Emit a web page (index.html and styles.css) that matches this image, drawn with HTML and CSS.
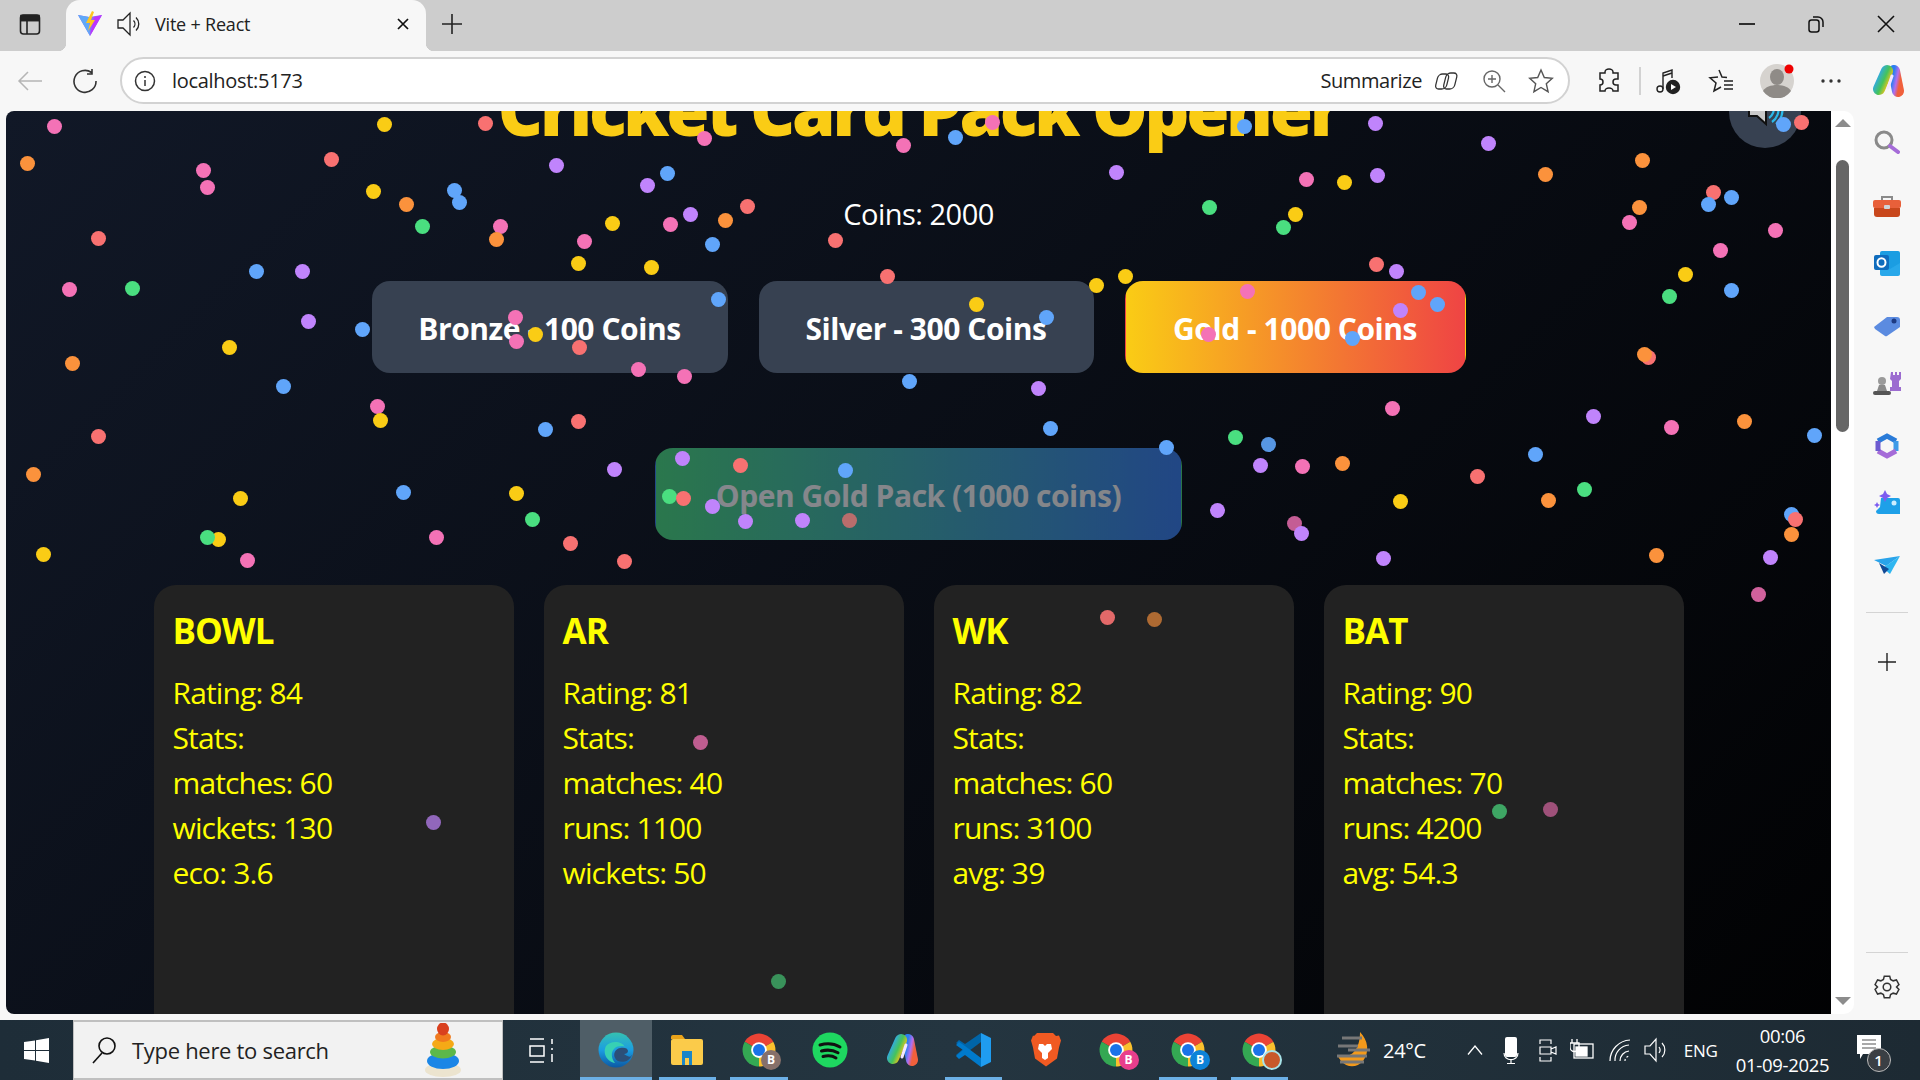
FILE: index.html
```html
<!DOCTYPE html>
<html lang="en">
<head>
	<meta charset="UTF-8">
	<title>Vite + React</title>
	<link rel="stylesheet" href="styles.css">
</head>
<body>
	<svg class="defs" width="0" height="0">
		<defs>
			<linearGradient id="cp1" x1="0" y1="0" x2="1" y2="1"><stop offset="0" stop-color="#2fa8f0"/><stop offset=".55" stop-color="#45c35a"/><stop offset="1" stop-color="#f5c518"/></linearGradient>
			<linearGradient id="cp2" x1="0" y1="0" x2="1" y2="1"><stop offset="0" stop-color="#2b7ff0"/><stop offset=".55" stop-color="#b06ef0"/><stop offset="1" stop-color="#f0603c"/></linearGradient>
		</defs>
		<symbol id="chrome" viewBox="0 0 48 48">
			<path d="M5 13A22 22 0 0 1 43 13L24 24Z" fill="#ea4335"/>
			<path d="M43 13A22 22 0 0 1 24 46L24 24Z" fill="#fbc02d"/>
			<path d="M24 46A22 22 0 0 1 5 13L24 24Z" fill="#34a853"/>
			<circle cx="24" cy="24" r="10.5" fill="#fff"/>
			<circle cx="24" cy="24" r="8" fill="#1a73e8"/>
		</symbol>
		<symbol id="copilot" viewBox="0 0 34 34">
			<path d="M23 7 27 27" fill="none" stroke="url(#cp2)" stroke-width="12" stroke-linecap="round"/>
			<path d="M16 7 8 25" fill="none" stroke="url(#cp1)" stroke-width="12" stroke-linecap="round"/>
			<path d="M17 24 21 12" fill="none" stroke="#f4e6ff" stroke-width="3" stroke-linecap="round"/>
		</symbol>
	</svg>

	<!-- tab strip -->
	<div class="tabstrip">
		<svg class="icon tab-panel" width="24" height="24" viewBox="0 0 24 24" fill="none" stroke="#222" stroke-width="1.6"><rect x="2.5" y="3" width="19" height="19" rx="3"/><path d="M2.5 8.5h19M9 8.5V22"/><path d="M3 3.5h18v5H3z" fill="#222"/></svg>
		<div class="tab">
			<svg class="icon" width="26" height="26" viewBox="0 0 26 26"><path d="M1 4 12 6 25 4 13 25Z" fill="#8d6cf5"/><path d="M1 4 12 6 13 25Z" fill="#5fa8f8"/><path d="M13 25 25 4 17 6Z" fill="#bd34fe"/><path d="M15 0 9 12h4l-2 8 7-11h-4l3-8Z" fill="#ffc51f"/></svg>
			<svg class="icon tab-sound" width="26" height="26" viewBox="0 0 26 26" fill="none" stroke="#222" stroke-width="1.3"><path d="M2 9h5l7-7v22l-7-7H2Z"/><path d="M17.5 9.5a5 5 0 0 1 0 7M20 6.500a9 9 0 0 1 0 13"/></svg>
			<span class="tab-title">Vite + React</span>
			<svg class="icon tab-close" width="14" height="14" viewBox="0 0 14 14" stroke="#111" stroke-width="1.7"><path d="M2 2l10 10M12 2 2 12"/></svg>
		</div>
		<svg class="icon tab-new" width="22" height="22" viewBox="0 0 22 22" stroke="#222" stroke-width="1.6"><path d="M11 1v20M1 11h20"/></svg>
		<div class="window-btns">
			<svg class="icon" width="16" height="16" viewBox="0 0 16 16" stroke="#111" stroke-width="1.7"><path d="M0 8h16"/></svg>
			<svg class="icon" width="16" height="18" viewBox="0 0 16 18" fill="none" stroke="#111" stroke-width="1.5"><rect x="1" y="5" width="10" height="12" rx="2.500"/><path d="M5 2h5a5 5 0 0 1 5 5v5"/></svg>
			<svg class="icon" width="18" height="18" viewBox="0 0 18 18" stroke="#111" stroke-width="1.6"><path d="M1 1l16 16M17 1 1 17"/></svg>
		</div>
	</div>

	<!-- address bar -->
	<div class="toolbar">
		<svg class="icon tool-back" width="26" height="22" viewBox="0 0 26 22" fill="none" stroke="#b5b5b5" stroke-width="1.500"><path d="M25 11H2M11 2l-9 9 9 9"/></svg>
		<svg class="icon tool-reload" width="26" height="26" viewBox="0 0 26 26" fill="none" stroke="#333" stroke-width="1.600"><path d="M19.500 4.500A11 11 0 1 0 24 13M20 1v5h-5"/></svg>
		<div class="address">
			<svg class="icon" width="22" height="22" viewBox="0 0 22 22" fill="none" stroke="#333" stroke-width="1.500"><circle cx="11" cy="11" r="9.500"/><path d="M11 10v6M11 6v2"/></svg>
			<span class="url">localhost:5173</span>
			<span class="summarize">Summarize</span>
			<svg class="icon" width="26" height="26" viewBox="0 0 26 26" fill="none" stroke="#333" stroke-width="1.300"><rect x="3" y="6" width="11" height="15" rx="4" transform="skewX(-14) translate(5 0)"/><rect x="11" y="4" width="11" height="16" rx="4" transform="skewX(-14) translate(5 1)"/></svg>
			<svg class="icon addr-zoom" width="24" height="24" viewBox="0 0 24 24" fill="none" stroke="#666" stroke-width="1.400"><circle cx="10" cy="10" r="8"/><path d="M16 16l7 7M10 6v8M6 10h8"/></svg>
			<svg class="icon addr-star" width="26" height="26" viewBox="0 0 26 26" fill="none" stroke="#555" stroke-width="1.400"><path d="M13 2l3.300 7.500 8 .8-6 5.400 1.800 8-7.100-4.200-7.100 4.200 1.800-8-6-5.400 8-.8Z"/></svg>
		</div>
		<div class="tool-right">
			<svg class="icon" width="24" height="26" viewBox="0 0 24 26" fill="none" stroke="#222" stroke-width="1.500"><path d="M8 4a4 3 0 0 1 8 0v1h5v6h-2a3 3 0 0 0 0 6h2v6H16a4 3 0 0 0-8 0H3v-6a3 3 0 0 0 0-6V5h5Z"/></svg>
			<span class="tool-sep"></span>
			<svg class="icon tool-music" width="26" height="28" viewBox="0 0 26 28" fill="none" stroke="#222" stroke-width="1.400"><circle cx="5" cy="22" r="3"/><path d="M8 22V6l9-3v8"/><path d="M8 9l9-3"/><circle cx="18" cy="20" r="6.500" fill="#222"/><path d="M16 17l5 3-5 3Z" fill="#fff" stroke="none"/></svg>
			<svg class="icon tool-fav" width="26" height="26" viewBox="0 0 26 26" fill="none" stroke="#222" stroke-width="1.500"><path d="M11 2l3 7 5 .5M10 9l-8 .8 6 5.200-2 8 7-4M16 13h9M16 17h9M16 21h9"/></svg>
			<svg class="icon tool-profile" width="34" height="34" viewBox="0 0 34 34"><circle cx="17" cy="17" r="17" fill="#d6d3cf"/><ellipse cx="17" cy="13" rx="7" ry="8" fill="#8f8b87"/><path d="M3 27c2-4 8-6 14-6s12 2 14 6a17 17 0 0 1-28 0Z" fill="#8f8b87"/><circle cx="29" cy="5" r="4.500" fill="#e00"/></svg>
			<svg class="icon tool-more" width="20" height="6" viewBox="0 0 20 6" fill="#333"><circle cx="2" cy="3" r="1.700"/><circle cx="10" cy="3" r="1.700"/><circle cx="18" cy="3" r="1.700"/></svg>
			<svg class="icon tool-copilot" width="34" height="34"><use href="#copilot"/></svg>
		</div>
	</div>

	<div class="viewport">
		<div class="page">
			<div class="app">
				<h1 class="app-title">Cricket Card Pack Opener</h1>
				<p class="coins">Coins: 2000</p>
				<div class="packs">
					<button class="pack pack-bronze">Bronze - 100 Coins</button>
					<button class="pack pack-silver">Silver - 300 Coins</button>
					<button class="pack pack-gold">Gold - 1000 Coins</button>
				</div>
				<button class="open-btn">Open Gold Pack (1000 coins)</button>
				<div class="cards">
					<div class="card">
						<h3>BOWL</h3>
						<p>Rating: 84</p>
						<p>Stats:</p>
						<p>matches: 60</p>
						<p>wickets: 130</p>
						<p>eco: 3.6</p>
					</div>
					<div class="card">
						<h3>AR</h3>
						<p>Rating: 81</p>
						<p>Stats:</p>
						<p>matches: 40</p>
						<p>runs: 1100</p>
						<p>wickets: 50</p>
					</div>
					<div class="card">
						<h3>WK</h3>
						<p>Rating: 82</p>
						<p>Stats:</p>
						<p>matches: 60</p>
						<p>runs: 3100</p>
						<p>avg: 39</p>
					</div>
					<div class="card">
						<h3>BAT</h3>
						<p>Rating: 90</p>
						<p>Stats:</p>
						<p>matches: 70</p>
						<p>runs: 4200</p>
						<p>avg: 54.3</p>
					</div>
				</div>
			</div>
			<div class="sound-btn">
				<svg width="72" height="72" viewBox="0 0 72 72" fill="none"><path d="M20 30h8l9-8v26l-9-8h-8Z" fill="#c9c9c9" stroke="#111" stroke-width="2"/><path d="M40 42a10 10 0 0 0 4-12M43 46a15 15 0 0 0 6-16M47 48a19 19 0 0 0 6-18" stroke="#2bb8e8" stroke-width="2.200"/></svg>
			</div>
			<div class="confetti" id="confetti"></div>
		</div>

		<div class="scrollbar">
			<span class="arrow-up"></span>
			<span class="thumb"></span>
			<span class="arrow-down"></span>
		</div>

		<div class="sidebar">
			<span class="side-item"><svg width="26" height="26" viewBox="0 0 26 26" fill="none"><circle cx="10" cy="10" r="8" stroke="#8a8a8a" stroke-width="3"/><path d="M16 16l8 6" stroke="#a56cd8" stroke-width="4" stroke-linecap="round"/></svg></span>
			<span class="side-item side-low"><svg width="28" height="24" viewBox="0 0 28 24"><path d="M9 6V3h10v3" fill="none" stroke="#8a8a8a" stroke-width="2"/><rect y="6" width="28" height="8" rx="2" fill="#e8603a"/><path d="M1 14h26v6a3 3 0 0 1-3 3H4a3 3 0 0 1-3-3Z" fill="#c8471c"/><rect x="11" y="11" width="6" height="4" rx="1" fill="#cfd3d6"/></svg></span>
			<span class="side-item"><svg width="26" height="26" viewBox="0 0 26 26"><rect x="6" y="1" width="20" height="24" rx="2" fill="#1b9de2"/><path d="M6 13l10 6 10-6v11a2 2 0 0 1-2 2H8a2 2 0 0 1-2-2Z" fill="#28a8ea"/><rect y="5" width="15" height="15" rx="2" fill="#0f6cbd"/><ellipse cx="7.500" cy="12.500" rx="4" ry="4.300" fill="none" stroke="#fff" stroke-width="2"/></svg></span>
			<span class="side-item side-low"><svg width="26" height="22" viewBox="0 0 26 22"><path d="M0 12 13 2h10a3 3 0 0 1 3 3v7L13 21a2 2 0 0 1-2 0L1 14Z" fill="#5b8be0"/><circle cx="20" cy="6" r="2.500" fill="#1d3a82"/></svg></span>
			<span class="side-item"><svg width="28" height="26" viewBox="0 0 28 26"><path d="M18 2h2v3h2V2h2v3h2V2h2v7l-2 2v6h2v4H17v-4h2v-6l-2-2Z" fill="#9c6cd0"/><circle cx="9" cy="11" r="4" fill="#9a9a9a"/><path d="M6 15h6l2 6H4Z" fill="#8a8a8a"/><rect y="21" width="18" height="4" rx="2" fill="#555"/></svg></span>
			<span class="side-item side-low"><svg width="26" height="26" viewBox="0 0 26 26" fill="none"><path d="M4 8 13 3l9 5" stroke="#2a7bd8" stroke-width="5"/><path d="M22 8v10" stroke="#3e9be8" stroke-width="5"/><path d="M22 18l-9 5-9-5" stroke="#a56cd8" stroke-width="5"/><path d="M4 18V8" stroke="#6d5bd0" stroke-width="5"/></svg></span>
			<span class="side-item"><svg width="26" height="26" viewBox="0 0 26 26"><path d="M7 8h17a2 2 0 0 1 2 2v14H5a3 3 0 0 1-3-3l4-4Z" fill="#1ea0e8"/><circle cx="20" cy="13" r="2.500" fill="#cdeeff"/><path d="M11 0l2 4 4 2-4 2-2 4-2-4-4-2 4-2ZM3 12l1 2 2 1-2 1-1 2-1-2-2-1 2-1Z" fill="#7d5cf0"/></svg></span>
			<span class="side-item side-low"><svg width="26" height="20" viewBox="0 0 26 20"><path d="M0 4 26 0 12 10Z" fill="#29a3ea"/><path d="M26 0 16 18 9 12Z" fill="#2fb6f0"/><path d="M5 7l5 11 5-5Z" fill="#124a96"/></svg></span>
			<span class="side-sep"></span>
			<span class="side-item side-plus"><svg width="18" height="18" viewBox="0 0 18 18" stroke="#222" stroke-width="1.400"><path d="M9 0v18M0 9h18"/></svg></span>
			<span class="side-spacer"></span>
			<span class="side-sep"></span>
			<span class="side-item side-gear"><svg width="26" height="26" viewBox="0 0 24 24" fill="none" stroke="#333" stroke-width="1.400"><circle cx="12" cy="12" r="3.500"/><path d="M9.500 2h5l.8 3 2.400 1.300 3-.8 2.300 4.200-2.200 2.300 2.200 2.300-2.300 4.200-3-.8-2.400 1.300-.8 3h-5l-.8-3-2.400-1.300-3 .8L1 14.300l2.200-2.300L1 9.700l2.300-4.200 3 .8 2.400-1.300Z"/></svg></span>
		</div>
	</div>

	<!-- windows taskbar -->
	<div class="taskbar">
		<div class="start">
			<svg width="25" height="25" viewBox="0 0 25 25" fill="#fff"><path d="M0 4l11-1.500V12H0ZM12 2.300 25 0v12H12ZM0 13h11v9.500L0 21ZM12 13h13v12l-13-2.200Z"/></svg>
		</div>
		<div class="search">
			<svg class="icon" width="26" height="28" viewBox="0 0 26 28" fill="none" stroke="#111" stroke-width="1.600"><circle cx="16" cy="10" r="8"/><path d="M11 17 2 27"/></svg>
			<span class="search-text">Type here to search</span>
			<svg class="icon search-toy" width="38" height="54" viewBox="0 0 38 54"><ellipse cx="19" cy="47" rx="18" ry="7" fill="#ece4cf"/><ellipse cx="19" cy="38" rx="16" ry="8" fill="#1b86e6"/><ellipse cx="19" cy="29" rx="13" ry="6.500" fill="#5cb84a"/><ellipse cx="19" cy="21" rx="11" ry="6" fill="#f5a916"/><ellipse cx="19" cy="14" rx="8" ry="5" fill="#f07a1e"/><ellipse cx="19" cy="6" rx="6" ry="6.500" fill="#d9401e"/></svg>
		</div>
		<div class="taskview">
			<svg width="25" height="25" viewBox="0 0 25 25" fill="none" stroke="#fff" stroke-width="1.500"><path d="M1 1h14M1 24h14M1 8h14v10H1zM23 1v5M23 10v2M23 16v8"/></svg>
		</div>
		<div class="app-btn active running">
			<svg width="36" height="36" viewBox="0 0 36 36"><defs><linearGradient id="ed" x1="0" y1="0" x2="0" y2="1"><stop offset="0" stop-color="#35c1b0"/><stop offset=".5" stop-color="#1b9de2"/><stop offset="1" stop-color="#0c59a4"/></linearGradient></defs><circle cx="18" cy="18" r="17.500" fill="url(#ed)"/><path d="M34 23c-3 8-14 9-17 3-2-4 0-9 5-10 4-1 8 0 8 3 0 2-2 3-4 3 8 6 7 0 8 1Z" fill="#2c4f78"/><path d="M8 14c5-6 16-5 19 1 0-1-8-2-11 2-3 3-3 9 1 14-7-1-13-9-9-17Z" fill="#37d0b4"/></svg>
		</div>
		<div class="app-btn running">
			<svg width="32" height="30" viewBox="0 0 32 30"><path d="M0 2a2 2 0 0 1 2-2h9l3 4H0Z" fill="#e9a31a"/><rect y="4" width="32" height="26" rx="2" fill="#fbcb4a"/><path d="M11 16h10v14h-3v-7h-4v7h-3Z" fill="#1b86c8"/></svg>
		</div>
		<div class="app-btn running">
			<svg width="36" height="36"><use href="#chrome"/></svg>
			<span class="chrome-badge badge-brown">B</span>
		</div>
		<div class="app-btn">
			<svg width="36" height="36" viewBox="0 0 36 36" fill="none"><circle cx="18" cy="18" r="17.500" fill="#1ed760"/><path d="M8 13c7-2 14-1.500 20 2M9.500 19c6-1.600 11.500-1 16.500 1.800M11 24.500c5-1.200 9.500-.8 13 1.400" stroke="#111" stroke-width="3" stroke-linecap="round"/></svg>
		</div>
		<div class="app-btn">
			<svg width="34" height="34"><use href="#copilot"/></svg>
		</div>
		<div class="app-btn running">
			<svg width="36" height="36" viewBox="0 0 36 36"><path d="M26 1 36 6v24l-10 5Z" fill="#1f9cf0"/><path d="M26 1v9L10 22l-6 4-3-3 7-6-7-6 3-3 6 4Z" fill="#0065a9"/><path d="M26 35v-9L10 14 4 10 1 13l7 5-7 6 3 3 6-4Z" fill="#007acc"/></svg>
		</div>
		<div class="app-btn">
			<svg width="32" height="36" viewBox="0 0 32 36"><path d="M8 1h16l3 3 3-.5 2 5-2 7-2 11-11 8-11-8-2-11-2-7 2-5L5 4Z" fill="#f15a22"/><path d="M10 12h4l2 2 2-2h4l1 5-4 4v5l-3 2-3-2v-5l-4-4Z" fill="#fff"/></svg>
		</div>
		<div class="app-btn">
			<svg width="36" height="36"><use href="#chrome"/></svg>
			<span class="chrome-badge badge-pink">B</span>
		</div>
		<div class="app-btn running">
			<svg width="36" height="36"><use href="#chrome"/></svg>
			<span class="chrome-badge badge-blue">B</span>
		</div>
		<div class="app-btn running">
			<svg width="36" height="36"><use href="#chrome"/></svg>
			<span class="chrome-badge badge-ball"></span>
		</div>
		<div class="weather">
			<svg width="38" height="36" viewBox="0 0 38 36"><path d="M24 0c8 8 10 20 3 29-6 7-16 7-22 0-2-3-3-4-3-6 8 4 22 0 22-23Z" fill="#f39a1c"/><path d="M6 6h20M2 14h20M12 18h22M1 24h30M4 30h24" stroke="#777" stroke-width="3"/></svg>
			<span>24°C</span>
		</div>
		<div class="tray">
			<svg width="16" height="10" viewBox="0 0 16 10" fill="none" stroke="#fff" stroke-width="1.300"><path d="M1 9.500 8 1l7 8.500"/></svg>
			<svg class="tray-mic" width="16" height="27" viewBox="0 0 16 27"><rect x="2" y="0" width="12" height="20" rx="2" fill="#fff"/><path d="M1 16c0 9 14 9 14 0M8 22v4M4 26.500h8" stroke="#fff" stroke-width="1.200" fill="none"/></svg>
			<svg class="tray-cam" width="18" height="27" viewBox="0 0 18 27" fill="none" stroke="#fff" stroke-width="1.200"><path d="M1 7V3h11v4M1 20v4h11v-4M1 10v7h11v-7zM12 12l5-2v7l-5-2"/></svg>
			<svg class="tray-power" width="24" height="24" viewBox="0 0 24 24" fill="none" stroke="#fff" stroke-width="1.300"><rect x="4" y="6" width="19" height="14"/><rect x="6" y="9" width="11" height="9" fill="#fff"/><path d="M2 1v4M7 1v4M0 5h9v4a4 4 0 0 1-9 0Z"/></svg>
			<svg width="22" height="24" viewBox="0 0 22 24" fill="none" stroke="#fff" stroke-width="1.200"><path d="M1 23A21 21 0 0 1 21 2M6 23A15 15 0 0 1 20 7M11 23a10 10 0 0 1 9-10"/><path d="M16 23a5 5 0 0 1 4-5" stroke-dasharray="2 2"/></svg>
			<svg class="tray-vol" width="22" height="26" viewBox="0 0 22 26" fill="none" stroke="#fff" stroke-width="1.200"><path d="M1 9h5l6-7v22l-6-7H1ZM15 10a5 5 0 0 1 0 6M18 6a10 10 0 0 1 0 14"/></svg>
			<span class="tray-lang">ENG</span>
		</div>
		<div class="clock">
			<span>00:06</span>
			<span>01-09-2025</span>
		</div>
		<div class="notify">
			<svg width="24" height="26" viewBox="0 0 24 26"><path d="M0 0h24v19H6l-3 5v-5H0Z" fill="#fff"/><path d="M5 5h14M5 9h14M5 13h14" stroke="#555" stroke-width="1.200"/></svg>
			<span class="notify-count">1</span>
		</div>
	</div>

	<script src="script.js"></script>
</body>
</html>
```

FILE: styles.css
```css
* {
	box-sizing: border-box;
}
html, body {
	margin: 0;
	height: 100%;
}
body {
	width: 1920px;
	height: 1080px;
	overflow: hidden;
	display: flex;
	flex-direction: column;
	font-family: "Open Sans", "Noto Sans", sans-serif;
	background: #f7f7f7;
}
.defs {
	position: absolute;
}
.icon {
	flex: none;
	display: block;
}

/* tab strip */
.tabstrip {
	height: 51px;
	flex: none;
	display: flex;
	align-items: center;
	background: #cdcdcd;
	padding: 0 0 3px 18px;
}
.tab-panel {
	margin-right: 24px;
}
.tab {
	position: relative;
	width: 360px;
	height: 51px;
	margin-bottom: -3px;
	display: flex;
	align-items: center;
	padding: 0 0 3px 11px;
	background: #f7f7f7;
	border-radius: 14px 14px 0 0;
}
.tab::before, .tab::after {
	content: "";
	position: absolute;
	bottom: 0;
	width: 8px;
	height: 8px;
}
.tab::before {
	left: -8px;
	background: radial-gradient(circle at 0 0, transparent 8px, #f7f7f7 8.5px);
}
.tab::after {
	right: -8px;
	background: radial-gradient(circle at 100% 0, transparent 8px, #f7f7f7 8.5px);
}
.tab-sound {
	margin-left: 13px;
}
.tab-title {
	margin-left: 13px;
	font-size: 18px;
	letter-spacing: -0.2px;
	color: #222;
}
.tab-close {
	margin-left: auto;
	margin-right: 16px;
}
.tab-new {
	margin-left: 15px;
}
.window-btns {
	margin-left: auto;
	display: flex;
	align-items: center;
	gap: 53px;
	padding-right: 25px;
}

/* toolbar */
.toolbar {
	height: 60px;
	flex: none;
	display: flex;
	align-items: center;
	background: #f7f7f7;
	padding: 0 0 1px 17px;
}
.tool-reload {
	margin-left: 29px;
}
.address {
	margin-left: 22px;
	width: 1450px;
	height: 47px;
	display: flex;
	align-items: center;
	background: #fff;
	border: 2px solid #d2d2d2;
	border-radius: 24px;
	padding-left: 12px;
}
.url {
	margin-left: 16px;
	font-size: 20px;
	letter-spacing: -0.3px;
	color: #222;
}
.summarize {
	margin-left: auto;
	margin-right: 10px;
	font-size: 20px;
	letter-spacing: -0.4px;
	color: #222;
}
.addr-zoom {
	margin-left: 24px;
}
.addr-star {
	margin-left: 22px;
	margin-right: 14px;
}
.tool-right {
	flex: 1;
	display: flex;
	align-items: center;
	padding-left: 27px;
}
.tool-sep {
	margin-left: 18px;
	width: 2px;
	height: 28px;
	background: #d2d2d2;
}
.tool-music {
	margin-left: 14px;
}
.tool-fav {
	margin-left: 27px;
}
.tool-profile {
	margin-left: 26px;
}
.tool-more {
	margin-left: 27px;
}
.tool-copilot {
	margin-left: 30px;
}

/* page area */
.viewport {
	height: 909px;
	flex: none;
	display: flex;
	padding: 0 0 6px 6px;
}
.page {
	position: relative;
	width: 1825px;
	overflow: hidden;
	border-radius: 8px 0 0 8px;
	background: linear-gradient(135deg, #111827, #000 108%);
	color: #fff;
	text-align: center;
}
.app {
	display: flex;
	flex-direction: column;
	align-items: center;
}
.app-title {
	margin: -56px 0 0;
	font-size: 70px;
	line-height: 108px;
	font-weight: 800;
	letter-spacing: -3.3px;
	color: #facc15;
	white-space: nowrap;
}
.coins {
	margin: 28px 0 45px;
	font-size: 29px;
	line-height: 45px;
	letter-spacing: -0.5px;
}
.packs {
	display: flex;
	gap: 31px;
}
.pack, .open-btn {
	height: 92px;
	padding: 2px 0 0;
	border: 1px solid transparent;
	border-radius: 18px;
	font-family: inherit;
	font-size: 30px;
	font-weight: 700;
	letter-spacing: -0.45px;
	color: #fff;
	background: #374151;
}
.pack-bronze {
	width: 356px;
}
.pack-silver {
	width: 335px;
}
.pack-gold {
	width: 341px;
	background: linear-gradient(90deg, #facc15, #ef4444);
}
.open-btn {
	width: 527px;
	margin-top: 75px;
	background: linear-gradient(90deg, #4ade80, #3b82f6);
	opacity: .5;
}
.cards {
	display: grid;
	grid-template-columns: repeat(4, 360px);
	gap: 30px;
	margin-top: 45px;
	text-align: left;
	color: #ff0;
}
.card {
	height: 560px;
	padding: 22px 19px;
	background: #222;
	border-radius: 22px;
}
.card h3 {
	margin: 0 0 15px;
	font-size: 35px;
	line-height: 48px;
	font-weight: 700;
	letter-spacing: -1px;
}
.card p {
	margin: 0;
	font-size: 30px;
	line-height: 45px;
	letter-spacing: -0.85px;
}
.sound-btn {
	position: absolute;
	top: -35px;
	right: 30px;
	width: 72px;
	height: 72px;
	border-radius: 50%;
	background: #374151;
}
.confetti {
	position: absolute;
	inset: 0;
	pointer-events: none;
}
.dot {
	position: absolute;
	width: 15px;
	height: 15px;
	border-radius: 50%;
}

/* scrollbar */
.scrollbar {
	position: relative;
	width: 23px;
	flex: none;
	background: #fff;
	border-radius: 0 10px 10px 0;
}
.arrow-up, .arrow-down {
	position: absolute;
	left: 4px;
	border-left: 8px solid transparent;
	border-right: 8px solid transparent;
}
.arrow-up {
	top: 8px;
	border-bottom: 8px solid #8c8c8c;
}
.arrow-down {
	bottom: 9px;
	border-top: 8px solid #8c8c8c;
}
.thumb {
	position: absolute;
	top: 49px;
	left: 5px;
	width: 13px;
	height: 272px;
	border-radius: 7px;
	background: #666;
}

/* right sidebar */
.sidebar {
	flex: 1;
	display: flex;
	flex-direction: column;
	align-items: center;
	padding: 2px 0 3px;
	margin-bottom: -6px;
}
.side-item {
	height: 60px;
	flex: none;
	display: flex;
	align-items: center;
}
.side-low {
	padding-top: 5px;
}
.side-sep {
	width: 42px;
	height: 1px;
	flex: none;
	margin-top: 19px;
	background: #d4d4d4;
}
.side-plus {
	margin-top: 19px;
}
.side-spacer {
	flex: 1;
}
.side-gear {
	margin-top: 4px;
}

/* taskbar */
.taskbar {
	height: 60px;
	flex: none;
	display: flex;
	align-items: center;
	background: linear-gradient(90deg, #1e2d38, #243540 50%, #1d2a33);
	color: #fff;
}
.start {
	width: 73px;
	height: 100%;
	display: flex;
	align-items: center;
	justify-content: center;
}
.search {
	width: 430px;
	height: 100%;
	display: flex;
	align-items: center;
	padding-left: 17px;
	background: #f2f2f2;
	border: solid #c0c0c0;
	border-width: 2px 1px;
	color: #222;
}
.search-text {
	margin-left: 15px;
	font-size: 22px;
	letter-spacing: -0.3px;
}
.search-toy {
	margin-left: auto;
	margin-right: 40px;
}
.taskview {
	width: 77px;
	display: flex;
	justify-content: center;
}
.app-btn {
	position: relative;
	width: 71.5px;
	height: 100%;
	flex: none;
	display: flex;
	align-items: center;
	justify-content: center;
}
.app-btn.active {
	background: #4f5e67;
}
.app-btn.running::after {
	content: "";
	position: absolute;
	bottom: 0;
	left: 7px;
	right: 7px;
	height: 3px;
	background: #6cb0e6;
}
.app-btn.active::after {
	left: 0;
	right: 0;
}
.chrome-badge {
	position: absolute;
	left: 38px;
	top: 30px;
	width: 20px;
	height: 20px;
	border-radius: 50%;
	font-size: 12px;
	line-height: 20px;
	text-align: center;
	font-weight: 700;
	color: #fff;
}
.badge-brown {
	background: #86706a;
}
.badge-pink {
	background: #e83e8c;
}
.badge-blue {
	background: #0d83d8;
}
.badge-ball {
	border: 2px solid #a7e3e8;
	background: #c8592a;
}
.weather {
	margin-left: 41px;
	display: flex;
	align-items: center;
	gap: 9px;
	font-size: 20px;
	letter-spacing: -0.3px;
}
.tray {
	margin-left: 41px;
	display: flex;
	align-items: center;
	gap: 15px;
}
.tray-mic {
	margin-left: 5px;
}
.tray-cam {
	margin-left: 5px;
}
.tray-power {
	margin-left: -2px;
}
.tray-vol {
	margin-left: -2px;
}
.tray-lang {
	margin-left: 3px;
	font-size: 17px;
	letter-spacing: -0.3px;
}
.clock {
	margin-left: 15px;
	width: 100px;
	height: 100%;
	display: flex;
	flex-direction: column;
	justify-content: center;
	align-items: center;
	gap: 8px;
	font-size: 18.5px;
	line-height: 21px;
	letter-spacing: -0.3px;
	white-space: nowrap;
}
.notify {
	position: relative;
	margin-left: 24px;
}
.notify-count {
	position: absolute;
	left: 10px;
	top: 13px;
	width: 24px;
	height: 24px;
	border-radius: 50%;
	border: 1px solid #bbb;
	background: #3a3f44;
	font-size: 15px;
	line-height: 22px;
	text-align: center;
	font-weight: 600;
}
```

FILE: script.js
```js
// falling dots, x and y are the centre of each dot on the screen
var colors = {
	p: '#f472b6',
	o: '#fb923c',
	y: '#facc15',
	r: '#f87171',
	v: '#c084fc',
	b: '#60a5fa',
	g: '#4ade80'
};

var dots = [
	[55,126,'p'],[28,163,'o'],[385,124,'y'],[486,123,'r'],[705,138,'p'],[904,145,'p'],[956,137,'b'],
	[332,159,'r'],[557,165,'v'],[668,173,'b'],[648,185,'v'],[204,170,'p'],[208,187,'p'],[374,191,'y'],
	[407,204,'o'],[455,190,'b'],[460,202,'b'],[423,226,'g'],[501,226,'p'],[497,239,'o'],[585,241,'p'],
	[613,223,'y'],[671,224,'p'],[691,214,'v'],[726,220,'o'],[748,206,'r'],[713,244,'b'],[836,240,'r'],
	[99,238,'r'],[257,271,'b'],[303,271,'v'],[579,263,'y'],[652,267,'y'],[888,276,'r'],[70,289,'p'],
	[133,288,'g'],[309,321,'v'],[363,329,'b'],[230,347,'y'],[73,363,'o'],[284,386,'b'],[719,299,'b'],
	[516,317,'p'],[517,341,'p'],[536,334,'y'],[580,347,'r'],[639,369,'p'],[685,376,'p'],[910,381,'b'],
	[378,406,'p'],[381,420,'y'],[579,421,'r'],[546,429,'b'],[99,436,'r'],[615,469,'v'],[34,474,'o'],
	[683,458,'v'],[741,465,'r'],[846,470,'b'],[404,492,'b'],[517,493,'y'],[241,498,'y'],[670,496,'g'],
	[684,498,'r'],[713,506,'v'],[746,521,'v'],[803,520,'v'],[850,520,'r',.7],[533,519,'g'],[219,539,'y'],
	[208,537,'g'],[437,537,'p'],[571,543,'r'],[44,554,'y'],[248,560,'p'],[625,561,'r'],
	[993,122,'p'],[1245,126,'b'],[1376,123,'v'],[1489,143,'v'],[1117,172,'v'],[1307,179,'p'],[1345,182,'y'],
	[1378,175,'v'],[1546,174,'o'],[1643,160,'o'],[1210,207,'g'],[1296,214,'y'],[1284,227,'g'],[1640,207,'o'],
	[1630,222,'p'],[1714,192,'r'],[1732,197,'b'],[1709,204,'b'],[1776,230,'p'],[1721,250,'p'],[1686,274,'y'],
	[1732,290,'b'],[1670,296,'g'],[1377,264,'r'],[1397,271,'v'],[1097,285,'y'],[1126,276,'y'],[977,304,'y'],
	[1047,317,'b'],[1248,291,'p'],[1419,292,'b'],[1438,304,'b'],[1401,310,'v'],[1209,334,'p'],[1353,338,'b'],
	[1649,357,'r'],[1645,354,'o'],[1039,388,'v'],[1393,408,'p'],[1051,428,'b'],[1594,416,'v'],[1672,427,'p'],
	[1745,421,'o'],[1815,435,'b'],[1167,447,'b'],[1236,437,'g'],[1269,444,'b',.9],[1261,465,'v'],[1303,466,'p'],
	[1343,463,'o'],[1536,454,'b'],[1478,476,'r'],[1585,489,'g'],[1549,500,'o'],[1401,501,'y'],[1218,510,'v'],
	[1295,523,'p',.8],[1302,533,'v'],[1384,558,'v'],[1657,555,'o'],[1771,557,'v'],[1792,514,'b'],[1796,519,'r'],
	[1792,534,'o'],[1784,124,'b'],[1802,122,'r'],[1759,594,'p',.85],[434,822,'v',.7],[701,742,'p',.75],
	[779,981,'g',.6],[1108,617,'r',.9],[1155,619,'o',.65],[1500,811,'g',.7],[1551,809,'p',.6]
];

var box = document.getElementById('confetti');
for (var i = 0; i < dots.length; i++) {
	var d = document.createElement('span');
	d.className = 'dot';
	// page starts at 6,111 on the screen
	d.style.left = (dots[i][0] - 7 - 7.5) + 'px';
	d.style.top = (dots[i][1] - 111 - 7.5) + 'px';
	d.style.background = colors[dots[i][2]];
	if (dots[i][3]) {
		d.style.opacity = dots[i][3];
	}
	box.appendChild(d);
}
```
